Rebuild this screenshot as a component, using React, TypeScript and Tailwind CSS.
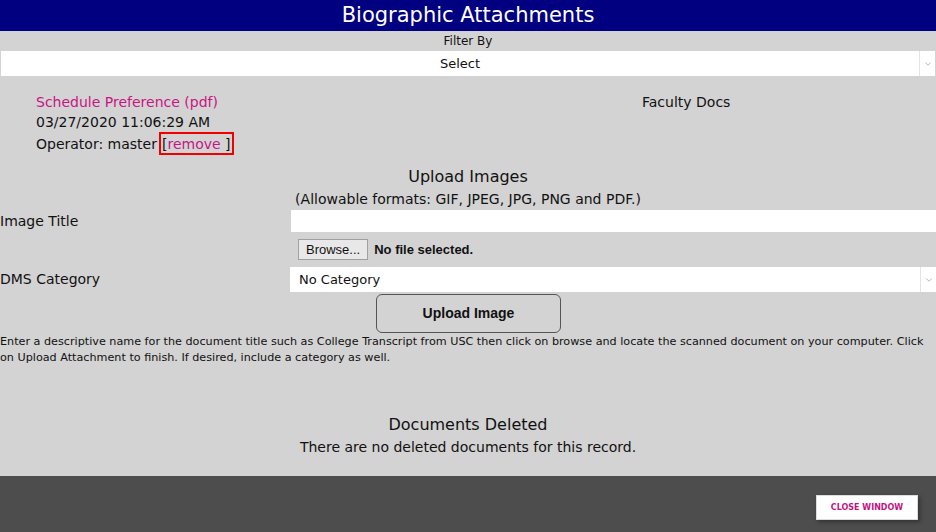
import { ChevronDown } from 'lucide-react';

const font = { fontFamily: '"DejaVu Sans", "Liberation Sans", sans-serif' };

function SelectBox({ label, centered }: { label: string; centered?: boolean }) {
  return (
    <div className="flex h-[25px] bg-white">
      <div
        className={`flex flex-1 items-center text-[13px] text-[#111] ${centered ? 'justify-center' : 'pl-[9px]'}`}
      >
        {label}
      </div>
      <div className="flex w-[16px] items-center justify-center border-l border-[#e3e3e3]">
        <ChevronDown className="h-[10px] w-[10px] text-[#aaa]" strokeWidth={2} />
      </div>
    </div>
  );
}

export default function App() {
  return (
    <div className="flex h-[532px] w-[936px] flex-col bg-[#d3d3d3] text-[#111]" style={font}>
      <div className="flex h-[31px] items-center justify-center bg-[#000080] text-[21px] text-white">
        Biographic Attachments
      </div>

      <div className="px-[1px]">
        <div className="flex h-[20px] items-center justify-center text-[12px]">Filter By</div>
        <SelectBox label="Select" centered />
      </div>

      <div className="mt-[16px] grid grid-cols-[606px_1fr] pl-[36px] text-[14px] leading-[20px]">
        <div>
          <div className="text-[#c71585]">Schedule Preference (pdf)</div>
          <div>03/27/2020 11:06:29 AM</div>
          <div className="flex items-center">
            Operator: master
            <span className="ml-[2px] inline-flex h-[23px] items-center border-2 border-[#f00000] px-[1px]">
              [<span className="text-[#c71585]">remove</span>&nbsp;]
            </span>
          </div>
        </div>
        <div>Faculty Docs</div>
      </div>

      <div className="mt-[11px] flex flex-col items-center">
        <div className="text-[16px] leading-[22px]">Upload Images</div>
        <div className="text-[14px] leading-[22px]">(Allowable formats: GIF, JPEG, JPG, PNG and PDF.)</div>
      </div>

      <div className="grid grid-cols-[290px_1fr] text-[14px]">
        <div className="flex h-[22px] items-center">Image Title</div>
        <div className="ml-[1px] h-[22px] bg-white" />
        <div />
        <div className="flex items-center gap-[6px] py-[7px] pl-[8px]" style={{ fontFamily: '"Liberation Sans", Arial, sans-serif' }}>
          <button className="h-[21px] border border-[#a0a0a0] bg-[#e8e8e8] px-[7px] text-[13px] text-[#111]">
            Browse...
          </button>
          <span className="text-[13px] font-bold">No file selected.</span>
        </div>
        <div className="flex h-[25px] items-center">DMS Category</div>
        <SelectBox label="No Category" />
      </div>

      <div className="mt-[2px] flex justify-center pl-[1px]">
        <button
          className="h-[39px] w-[185px] rounded-[6px] border border-[#555] bg-[#d3d3d3] text-[14px] font-bold text-[#111]"
          style={{ fontFamily: '"Liberation Sans", Arial, sans-serif' }}
        >
          Upload Image
        </button>
      </div>

      <p className="mt-[1px] pr-[10px] text-[11.2px] leading-[16px]">
        Enter a descriptive name for the document title such as College Transcript from USC then click on browse and locate the scanned document on your computer. Click on Upload Attachment to finish. If desired, include a category as well.
      </p>

      <div className="mt-[48px] flex flex-col items-center">
        <div className="text-[16px] leading-[22px]">Documents Deleted</div>
        <div className="text-[14px] leading-[22px]">There are no deleted documents for this record.</div>
      </div>

      <div className="mt-auto flex h-[56px] items-start justify-end bg-[#4d4d4d] pr-[18px] pt-[19px]">
        <button className="h-[25px] w-[102px] border border-[#ddd] bg-white text-[8px] font-bold text-[#c0157f] shadow-[2px_2px_4px_rgba(0,0,0,0.35)]">
          CLOSE WINDOW
        </button>
      </div>
    </div>
  );
}
